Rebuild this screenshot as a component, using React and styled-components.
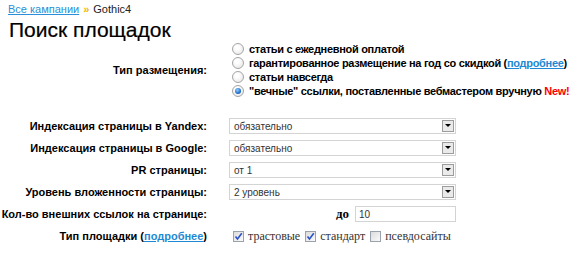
import React, { useState } from 'react';
import styled, { createGlobalStyle } from 'styled-components';

const GlobalStyle = createGlobalStyle`
  body {
    margin: 0;
    background: #fff;
    font-family: "Liberation Sans", Arial, sans-serif;
  }
`

const placements = [
  { id: 'daily', text: 'статьи с ежедневной оплатой' },
  { id: 'year', text: 'гарантированное размещение на год со скидкой', more: true },
  { id: 'forever', text: 'статьи навсегда' },
  { id: 'eternal', text: '"вечные" ссылки, поставленные вебмастером вручную', isNew: true },
]

const selects = [
  { label: 'Индексация страницы в Yandex:', value: 'обязательно' },
  { label: 'Индексация страницы в Google:', value: 'обязательно' },
  { label: 'PR страницы:', value: 'от 1' },
  { label: 'Уровень вложенности страницы:', value: '2 уровень' },
]

const siteTypes = [
  { id: 'trust', text: 'трастовые', checked: true },
  { id: 'std', text: 'стандарт', checked: true },
  { id: 'pseudo', text: 'псевдосайты', checked: false },
]

const App = () => {
  const [placement, setPlacement] = useState('eternal')
  const [types, setTypes] = useState(
    siteTypes.reduce((acc, t) => ({ ...acc, [t.id]: t.checked }), {})
  )

  const toggleType = id => setTypes({ ...types, [id]: !types[id] })

  return (
    <Page>
      <GlobalStyle />
      <Breadcrumbs>
        <CrumbLink href="#">Все кампании</CrumbLink>
        <CrumbArrow>»</CrumbArrow>
        <span>Gothic4</span>
      </Breadcrumbs>
      <Title>Поиск площадок</Title>

      <Form>
        <Label>Тип размещения:</Label>
        <RadioList>
          {placements.map(p => (
            <RadioRow key={p.id} onClick={() => setPlacement(p.id)}>
              <Radio checked={placement === p.id} />
              <span>
                {p.text}
                {p.more && (
                  <> (<MoreLink href="#">подробнее</MoreLink>)</>
                )}
                {p.isNew && <NewMark> New!</NewMark>}
              </span>
            </RadioRow>
          ))}
        </RadioList>

        <Spacer />

        {selects.map(s => (
          <React.Fragment key={s.label}>
            <Label>{s.label}</Label>
            <Select>
              <span>{s.value}</span>
              <SelectArrow />
            </Select>
          </React.Fragment>
        ))}

        <Label>Кол-во внешних ссылок на странице:</Label>
        <UpToCell>
          <UpTo>до</UpTo>
          <Input defaultValue="10" />
        </UpToCell>

        <Label>
          Тип площадки (<MoreLink href="#">подробнее</MoreLink>)
        </Label>
        <CheckList>
          {siteTypes.map(t => (
            <CheckItem key={t.id} onClick={() => toggleType(t.id)}>
              <Checkbox checked={types[t.id]}>
                {types[t.id] && (
                  <svg width="9" height="9" viewBox="0 0 9 9">
                    <path d="M1.5 4.5 L3.5 7 L7.8 1.2" fill="none" stroke="#2a52c9" strokeWidth="1.6" />
                  </svg>
                )}
              </Checkbox>
              {t.text}
            </CheckItem>
          ))}
        </CheckList>
      </Form>
    </Page>
  )
}

export default App

const Page = styled.div`
  width: 580px;
  height: 255px;
  padding: 2px 0 0 8px;
  box-sizing: border-box;
  overflow: hidden;
  color: #000;
`
const Breadcrumbs = styled.div`
  display: flex;
  align-items: center;
  gap: 4px;
  height: 14px;
  font-size: 11px;
  line-height: 14px;
  color: #222;
`
const CrumbLink = styled.a`
  color: #2a8fd8;
  text-decoration: underline;
`
const CrumbArrow = styled.span`
  color: #f2b600;
  font-weight: bold;
  font-size: 11px;
`
const Title = styled.h1`
  margin: 1px 0 0 1px;
  font-size: 21px;
  line-height: 26px;
  font-weight: normal;
  -webkit-text-stroke: 0.2px #000;
`
const Form = styled.div`
  display: grid;
  grid-template-columns: 199px 227px;
  column-gap: 22px;
  row-gap: 6px;
  align-items: center;
  margin-top: -1px;
  font-size: 11px;
  font-weight: bold;
`
const Label = styled.div`
  display: flex;
  justify-content: flex-end;
  white-space: nowrap;
  line-height: 16px;
`
const RadioList = styled.div`
  display: flex;
  flex-direction: column;
  grid-column: 2;
  width: 350px;
  letter-spacing: -0.3px;
`
const RadioRow = styled.div`
  display: flex;
  align-items: center;
  gap: 5px;
  height: 14px;
  white-space: nowrap;
  cursor: pointer;
`
const Radio = styled.span`
  position: relative;
  flex: none;
  width: 10px;
  height: 10px;
  margin-left: 3px;
  border: 1px solid #a5a5a5;
  border-radius: 50%;
  background: radial-gradient(circle at 40% 35%, #fff 20%, #e2e2e2 100%);

  &::after {
    content: '';
    display: ${p => (p.checked ? 'block' : 'none')};
    position: absolute;
    top: 2px;
    left: 2px;
    width: 6px;
    height: 6px;
    border-radius: 50%;
    background: radial-gradient(circle at 40% 35%, #8fd0ff 0%, #1560c0 70%);
  }
`
const MoreLink = styled.a`
  color: #1f88d2;
  text-decoration: underline;
`
const NewMark = styled.span`
  color: #ff0000;
`
const Spacer = styled.div`
  grid-column: 1 / -1;
  height: 8px;
`
const Select = styled.div`
  display: flex;
  align-items: center;
  justify-content: space-between;
  height: 16px;
  padding: 0 1px 0 4px;
  box-sizing: border-box;
  border: 1px solid #d4d4d4;
  background: #fff;
  font-size: 10px;
  font-weight: normal;
  color: #333;
`
const SelectArrow = styled.span`
  position: relative;
  width: 12px;
  height: 12px;
  border: 1px solid #9c9c9c;
  background: #eaeaea;
  box-sizing: border-box;

  &::after {
    content: '';
    position: absolute;
    left: 2px;
    top: 3px;
    border-left: 3px solid transparent;
    border-right: 3px solid transparent;
    border-top: 3px solid #000;
  }
`
const UpToCell = styled.div`
  display: flex;
  align-items: center;
  justify-content: flex-end;
  gap: 6px;
`
const UpTo = styled.span`
  font-family: "Liberation Serif", "Times New Roman", serif;
  font-size: 13px;
`
const Input = styled.input`
  width: 101px;
  height: 16px;
  padding: 0 3px;
  box-sizing: border-box;
  border: 1px solid #d4d4d4;
  font-family: "Liberation Sans", Arial, sans-serif;
  font-size: 10px;
  color: #333;
  outline: none;
`
const CheckList = styled.div`
  display: flex;
  align-items: center;
  gap: 5px;
  margin-left: 4px;
  font-family: "Liberation Serif", "Times New Roman", serif;
  font-size: 12px;
  font-weight: normal;
  color: #333;
`
const CheckItem = styled.label`
  display: flex;
  align-items: center;
  gap: 4px;
  white-space: nowrap;
  cursor: pointer;
`
const Checkbox = styled.span`
  display: flex;
  align-items: center;
  justify-content: center;
  width: 11px;
  height: 11px;
  box-sizing: border-box;
  border: 1px solid #9aa3ad;
  background: linear-gradient(135deg, #dcdcdc, #fafafa);
`
